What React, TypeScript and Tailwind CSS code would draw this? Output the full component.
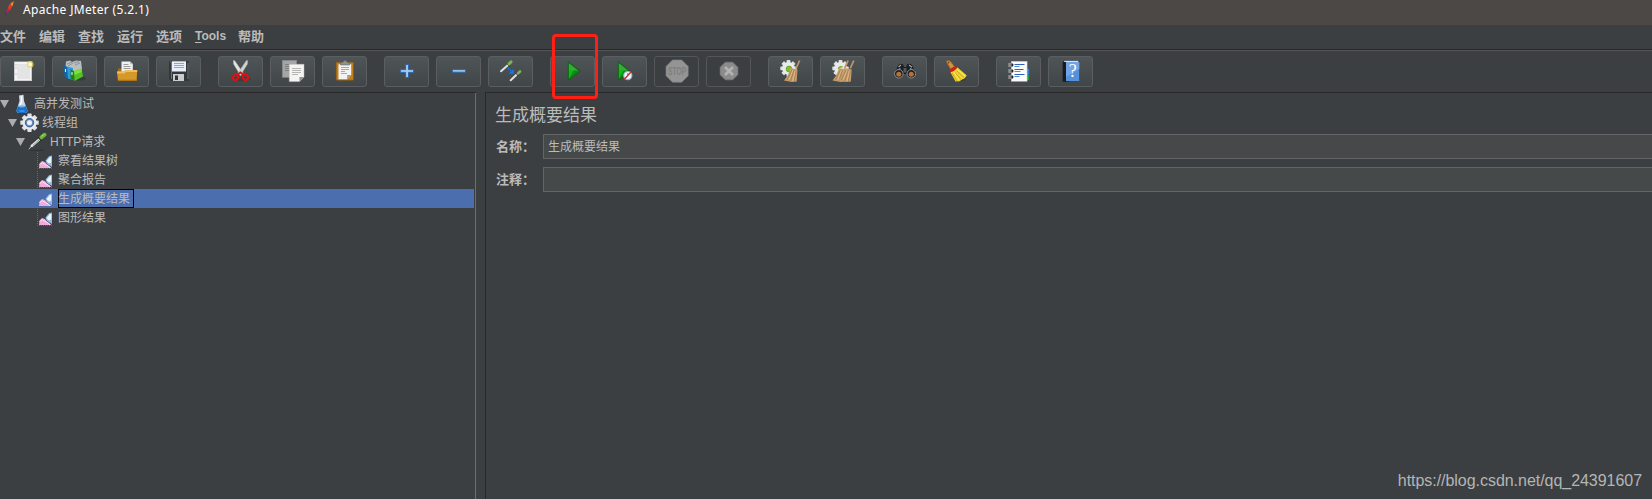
import React from "react";

type Glyph = () => React.JSX.Element;

const star = (cx: number, cy: number, r: number) => {
  const pts: string[] = [];
  for (let i = 0; i < 8; i++) {
    const a = (Math.PI / 4) * i + Math.PI / 8;
    pts.push(`${(cx + r * Math.cos(a)).toFixed(2)},${(cy + r * Math.sin(a)).toFixed(2)}`);
  }
  return pts.join(" ");
};

const Gear = ({ cx, cy, s = 1 }: { cx: number; cy: number; s?: number }) => (
  <g transform={`translate(${cx} ${cy}) scale(${s})`}>
    {[0, 45, 90, 135].map((a) => (
      <rect key={a} x="-1.9" y="-8.2" width="3.8" height="16.4" rx=".6" fill="#dfe1e3" transform={`rotate(${a})`} />
    ))}
    <circle r="6.3" fill="#e9eaeb" />
  </g>
);

const SmallBroom = ({ x }: { x: number }) => (
  <g transform={`translate(${x} 0)`}>
    <path d="M31.6 4.5 28 12.5" stroke="#c09566" strokeWidth="1.8" />
    <path d="M22.5 12 29.5 13.5 28.7 25.4 24 26 16 24.5 20 19Z" fill="#c49c6c" />
    <path d="M24 14 19 24M26 14 22.5 25M28 15 26 25.5" stroke="#94703f" strokeWidth=".6" />
    <path d="M25 14 21 23.5M27.2 15 24.8 25" stroke="#e6c89c" strokeWidth=".7" />
  </g>
);

const NewFile: Glyph = () => (
  <g>
    <rect x="14" y="5.5" width="18" height="19.5" fill="#c9c9c9" />
    <rect x="15" y="6" width="16" height="18.2" fill="#f4f4f4" />
    <rect x="17" y="8" width="13" height="15" fill="#e4e4e4" />
    <path d="M15.5 9h1M15.5 12h1M15.5 18h1" stroke="#999" />
    <circle cx="30.2" cy="8.4" r="3.4" fill="#e8d65c" opacity=".75" />
    <circle cx="30.2" cy="8.4" r="1.9" fill="#fdf9cf" />
  </g>
);

const Templates: Glyph = () => (
  <g>
    <ellipse cx="27" cy="22.5" rx="7" ry="2" fill="#2c2f30" opacity=".5" />
    <path d="M13.5 11 14 5.5 18 4.5 20 6 24 4.5 29 5 30 13 22 16Z" fill="#b9bfc1" />
    <path d="M15 8l5-2M16 10l5-3M22 7l5-1.5M23 9l5-2" stroke="#7e878b" strokeWidth=".8" />
    <path d="M12 9.5 17 11.5V23.5L12.5 20.5Z" fill="#0e66ae" />
    <path d="M15 10.5 21 12V24L16 22.5Z" fill="#2d9be0" />
    <path d="M18.5 13 22.5 15.5V25L18.5 22.5Z" fill="#23820f" />
    <path d="M22 15 29.5 12.5 31 20.5 22.5 25Z" fill="#4fc51f" />
    <path d="M22 15 29.5 12.5 29.8 16 22.5 19Z" fill="#7ddd42" />
    <path d="M13.5 13v3M20 16v3" stroke="#d9f3ff" strokeWidth="1.1" />
  </g>
);

const Open: Glyph = () => (
  <g>
    <path d="M14 12.5h5l1 1.5h12.5V24H14Z" fill="#a86c10" />
    <path d="M17.5 5.5h8.7l2.6 2.6V18H17.5Z" fill="#f1f1f1" />
    <path d="M26 5.5v2.8h2.8" fill="#bdbdbd" />
    <path d="M19.5 8.5h5M19.5 10.5h7M19.5 12.5h7" stroke="#9b9b9b" />
    <path d="M13 15.5H20l1.5-1.6H33.2L32.5 25H14Z" fill="#d5982a" />
    <path d="M13 15.5H20l1.5-1.6H33.2v2H22l-1.3 1.6H13.2Z" fill="#efbf5b" />
    <path d="M14 24.3h18.5" stroke="#a86c10" />
  </g>
);

const Save: Glyph = () => (
  <g>
    <path d="M13.5 5h18.5q1 0 1 1v19H15l-2-2V5.5Z" fill="#35383a" />
    <path d="M14 6h1.5v17M32 7v16" stroke="#6f7375" fill="none" />
    <rect x="16" y="5.3" width="14" height="10.2" fill="#e7f0fa" />
    <path d="M18 7.5h10M18 9.5h10M18 11.5h10" stroke="#8aa8cb" />
    <rect x="17" y="18" width="11" height="7" fill="#c9cccd" />
    <rect x="19" y="19.5" width="3" height="4.5" fill="#333" />
  </g>
);

const Cut: Glyph = () => (
  <g>
    <ellipse cx="24" cy="23" rx="9" ry="2.2" fill="#2c2f30" opacity=".4" />
    <path d="M15.3 4.6Q16 3.8 17 5L25.5 17.5 22.5 19.5 15.5 8Z" fill="#e4e6e4" stroke="#9fa2a0" strokeWidth=".4" />
    <path d="M29.7 4.6Q29 3.8 28 5L19.5 17.5 22.5 19.5 29.5 8Z" fill="#cfd2cf" stroke="#9fa2a0" strokeWidth=".4" />
    <ellipse cx="17.7" cy="21" rx="2.6" ry="3" fill="none" stroke="#dc1111" strokeWidth="2.2" transform="rotate(30 17.7 21)" />
    <ellipse cx="27.3" cy="21" rx="2.6" ry="3" fill="none" stroke="#dc1111" strokeWidth="2.2" transform="rotate(-30 27.3 21)" />
    <path d="M19 19 22.5 16.5 26 19" stroke="#dc1111" strokeWidth="2" fill="none" />
  </g>
);

const Copy: Glyph = () => (
  <g>
    <rect x="12.3" y="4.3" width="14.4" height="17" fill="#a4a6a5" stroke="#858786" strokeWidth=".6" />
    <path d="M15 8.5h9M15 10.5h4M15 12.5h4M15 14.5h4" stroke="#7d7f7e" />
    <path d="M19.3 8.3H34V21l-4.5 4.6H19.3Z" fill="#f4f4f3" stroke="#bdbdbd" strokeWidth=".5" />
    <path d="M34 21l-4.5 4.6V21Z" fill="#8f908f" />
    <path d="M22 12.5h9M22 14.5h9M22 16.5h9M22 18.5h6" stroke="#b4b5b4" />
  </g>
);

const Paste: Glyph = () => (
  <g>
    <rect x="14.2" y="6.2" width="17.3" height="18" rx="1" fill="#c37f18" stroke="#8a560b" strokeWidth=".6" />
    <path d="M16.5 8.3h12.7V19l-4 4.2h-8.7Z" fill="#f2f2f1" />
    <path d="M29.2 19l-4 4.2V19Z" fill="#9a9a98" />
    <path d="M19 11.5h8M19 13.5h8M19 15.5h4M19 17.5h6" stroke="#a9aaa8" />
    <path d="M18.5 9V6.5h2.4Q21 4.6 23 4.6t2.2 1.9h2.3V9Z" fill="#8f918e" stroke="#5f615e" strokeWidth=".5" />
  </g>
);

const Plus: Glyph = () => (
  <path d="M21.6 8.5h2.9v5.1h5.1v2.8h-5.1v5.2h-2.9v-5.2h-5.2v-2.8h5.2Z" fill="#a4c8ec" stroke="#2b65b0" strokeWidth="1" />
);

const Minus: Glyph = () => <rect x="16.4" y="13.6" width="13.2" height="2.6" fill="#a4c8ec" stroke="#2b65b0" strokeWidth="1" />;

const Toggle: Glyph = () => (
  <g strokeLinecap="round">
    <path d="M13 15.2 20 9" stroke="#dfe2df" strokeWidth="2" />
    <path d="M19.4 8 21.4 10.2" stroke="#1e241c" strokeWidth="1" />
    <path d="M21 7.8 23 5.9" stroke="#7fb35a" strokeWidth="3" />
    <path d="M22.7 24.2 28.5 18.7" stroke="#dfe2df" strokeWidth="2" />
    <path d="M28.2 17.6 30 19.5" stroke="#1e241c" strokeWidth="1" />
    <path d="M30 17.4 32 15.5" stroke="#7fb35a" strokeWidth="2.6" />
    <path d="M19.8 12 23 15" stroke="#1677f2" strokeWidth="1.6" strokeDasharray="1.6 1.2" strokeLinecap="butt" />
    <path d="M25.8 13V17.8H20.6Z" fill="#1677f2" />
  </g>
);

const Play = ({ x = 18 }: { x?: number }) => (
  <g transform={`translate(${x - 18} 0)`}>
    <path d="M18.3 5.8 30 15 18.3 24.2Z" fill="#0c8a12" stroke="#075c0a" strokeWidth=".7" />
    <path d="M18.9 7.3 27.8 14.6 18.9 14.6Z" fill="#3aa83c" />
    <path d="M18.9 14 24 14 18.9 22.5Z" fill="#0fb817" />
  </g>
);

const Start: Glyph = () => <Play />;

const StartNoTimers: Glyph = () => (
  <g>
    <Play x={16} />
    <circle cx="25.8" cy="19.6" r="4.1" fill="#eef4fb" stroke="#8eb0d8" strokeWidth="1.1" />
    <path d="M25.8 17v2.6" stroke="#5c7fb0" />
    <path d="M29.3 15.6 22 23.8" stroke="#c82b2b" strokeWidth="1.4" />
  </g>
);

const Stop: Glyph = () => (
  <g>
    <polygon points={star(23.1, 15.1, 12)} fill="#949494" stroke="#818181" strokeWidth=".6" />
    <text x="23.1" y="18.6" textAnchor="middle" textLength="18" lengthAdjust="spacingAndGlyphs" className="fill-[#7f7f7f] font-['Liberation_Sans'] text-[10px] font-bold">
      STOP
    </text>
  </g>
);

const Shutdown: Glyph = () => (
  <g>
    <polygon points={star(23, 15, 9.6)} fill="#8b8b8b" stroke="#7a7a7a" strokeWidth=".6" />
    <path d="M19 11l8 8M27 11l-8 8" stroke="#b3b3b3" strokeWidth="2.6" />
  </g>
);

const Clear: Glyph = () => (
  <g>
    <Gear cx={20.5} cy={12.3} />
    <circle cx="21" cy="13" r="2.9" fill="#7bc520" stroke="#4c8c12" strokeWidth=".6" />
    <SmallBroom x={0} />
  </g>
);

const ClearAll: Glyph = () => (
  <g>
    <Gear cx={20.5} cy={12.3} />
    <path d="M18.5 13a2.8 2.8 0 0 1 4-2" stroke="#6fb51d" strokeWidth="1.6" fill="none" />
    <SmallBroom x={-3.5} />
    <SmallBroom x={2.2} />
  </g>
);

const Search: Glyph = () => (
  <g>
    <path d="M12.2 18 16 9.5Q18 6.7 21 8.3L22 11h2.2l1-2.7Q28.2 6.7 30.3 9.5L34 18Z" fill="#1d1e20" />
    <path d="M16.5 11 19 9M27 9l3 2.3M15 14.5l3.5-2M28 12.5l3.5 2" stroke="#a5a9ad" strokeWidth="1.1" />
    <circle cx="16.8" cy="17.8" r="4.3" fill="#202124" stroke="#8b8e92" strokeWidth="1" />
    <circle cx="29.3" cy="17.8" r="4.3" fill="#202124" stroke="#8b8e92" strokeWidth="1" />
    <circle cx="16.8" cy="18.3" r="2.5" fill="#b5713a" />
    <circle cx="29.3" cy="18.3" r="2.5" fill="#b5713a" />
    <rect x="21.5" y="12" width="3" height="4.5" fill="#55585c" />
  </g>
);

const Broom: Glyph = () => (
  <g>
    <path d="M22 24.5 33 20.5 31 25Z" fill="#2c2f30" opacity=".4" />
    <path d="M12.2 5.6Q13.5 3.8 16 4.8L20.5 10.5 16.5 13Z" fill="#d3913d" stroke="#95591a" strokeWidth=".6" />
    <circle cx="14.6" cy="6.5" r=".9" fill="#7d4812" />
    <path d="M16 15.5 23 11 32.8 19.5 30.5 22.5 28 23.5 25.5 25.3 21.5 25.5Z" fill="#efd52f" />
    <path d="M18 17 23 25M20.5 16 27 23.5M22.5 14.5 30 21.5" stroke="#b8940f" strokeWidth=".7" />
    <path d="M20 16 25 24M23 13.5 31 20" stroke="#fff58a" strokeWidth=".7" />
    <path d="M15.8 15.2Q20 14 22.5 10.7" stroke="#cf1f1b" strokeWidth="2.8" fill="none" />
  </g>
);

const FunctionHelper: Glyph = () => (
  <g>
    <rect x="30" y="12.7" width="3.3" height="6" fill="#2a7de0" />
    <rect x="30" y="19" width="3.3" height="5" fill="#239b1f" />
    <rect x="15.3" y="5.3" width="15.8" height="20" fill="#fafafa" stroke="#b9b9b9" strokeWidth=".5" />
    <path d="M18.5 8.5h10M18.5 13.5h9M18.5 18.5h10" stroke="#2c62bd" strokeWidth="1.2" />
    <path d="M18.5 10.5h5M18.5 15.5h6M18.5 20.5h5" stroke="#5a8ad2" strokeWidth="1.1" />
    {[9, 15, 21].map((y) => (
      <g key={y}>
        <circle cx="15.8" cy={y} r="1.7" fill="#222" />
        <path d={`M12.300 ${y - 1}h3.400M12.300 ${y + 1}h3.400`} stroke="#e3e3e3" strokeWidth=".9" />
      </g>
    ))}
  </g>
);

const Help: Glyph = () => (
  <g>
    <path d="M14.7 6 17 4.5H31.3V24H30L18 25.7H14.7Z" fill="#191a1c" />
    <path d="M16.5 4.7H31L30 6H16Z" fill="#d9dfe5" />
    <rect x="18" y="6" width="13.3" height="19" fill="#5590dc" />
    <path d="M18 6h13.3v7L18 21Z" fill="#6ea4e8" />
    <text x="24.7" y="21" textAnchor="middle" className="fill-white font-['Liberation_Serif'] text-[18px]">?</text>
  </g>
);

const groups: { icon: Glyph; name: string; off?: boolean }[][] = [
  [{ icon: NewFile, name: "new" }, { icon: Templates, name: "templates" }, { icon: Open, name: "open" }, { icon: Save, name: "save" }],
  [{ icon: Cut, name: "cut" }, { icon: Copy, name: "copy" }, { icon: Paste, name: "paste" }],
  [{ icon: Plus, name: "expand" }, { icon: Minus, name: "collapse" }, { icon: Toggle, name: "toggle" }],
  [{ icon: Start, name: "start" }, { icon: StartNoTimers, name: "startNoTimers" }, { icon: Stop, name: "stop", off: true }, { icon: Shutdown, name: "shutdown", off: true }],
  [{ icon: Clear, name: "clear" }, { icon: ClearAll, name: "clearAll" }],
  [{ icon: Search, name: "search" }, { icon: Broom, name: "resetSearch" }],
  [{ icon: FunctionHelper, name: "functions" }, { icon: Help, name: "help" }],
];

const Flask: Glyph = () => (
  <g>
    <path d="M7 1.5 11.5 .8 12 7 15.5 16.5Q15.500 19 12.500 19H7.500Q4.500 19 4.500 16.500L7.500 7Z" fill="#cdd9e4" />
    <path d="M9.500 2v6L7 13" stroke="#fff" strokeWidth="1.300" fill="none" />
    <path d="M6 12H13.800L15.500 16.500Q15.500 19 12.500 19H7.500Q4.500 19 4.500 16.500Z" fill="#1670cf" />
    <ellipse cx="9.800" cy="12.300" rx="3.700" ry="1.100" fill="#75b6f2" />
    <path d="M7.500 17h5" stroke="#54a5f0" strokeWidth="1.200" />
  </g>
);

const ThreadGroup: Glyph = () => (
  <g>
    <Gear cx={9.5} cy={9.7} s={1.12} />
    <circle cx="9.5" cy="9.7" r="4.2" fill="#6288bf" stroke="#385f9c" strokeWidth="1" />
    <circle cx="9.5" cy="9.7" r="2.6" fill="#dbe6f5" />
    <path d="M8.500 7.900 11.500 9.700 8.500 11.500Z" fill="#fff" />
  </g>
);

const Pipette: Glyph = () => (
  <g strokeLinecap="round">
    <path d="M3 18.3h12" stroke="#26292a" strokeWidth="1.2" opacity=".5" />
    <path d="M1 16.8 4 14" stroke="#c9cdcc" strokeWidth="1" />
    <path d="M3.7 14 11.3 7.3" stroke="#e3e7e6" strokeWidth="2.4" />
    <path d="M5 13.3 11 8" stroke="#7f8a88" strokeWidth=".8" />
    <path d="M10.5 5.5 13.6 8.8" stroke="#2a3327" strokeWidth="1.5" />
    <path d="M13.5 5.3 16.5 2.8" stroke="#6bb23f" strokeWidth="4" />
    <path d="M13.5 4.3 16 2.4" stroke="#a9dd7f" strokeWidth="1" />
  </g>
);

const Chart: Glyph = () => (
  <g>
    <path d="M1.5 1v16.500H17" stroke="#656a6c" strokeDasharray="1 1" fill="none" />
    <path d="M3 17 3.500 12.500 6 10 9 11 11 13.500 15.500 17Z" fill="#f3a9dc" />
    <path d="M3.500 14 6 11.500 9 13.500 12.500 15 14 17" stroke="#ffe0f6" fill="none" />
    <path d="M9.500 9.500 13 5.200 16 4.500V16L11 13Z" fill="#8fbbe0" />
    <path d="M10.500 10 14 6 15.200 6V11.500L13 12.500Z" fill="#e8f5fd" />
  </g>
);

const tree: { label: string; depth: number; icon: Glyph; leaf?: boolean; selected?: boolean }[] = [
  { label: "高并发测试", depth: 0, icon: Flask },
  { label: "线程组", depth: 1, icon: ThreadGroup },
  { label: "HTTP请求", depth: 2, icon: Pipette },
  { label: "察看结果树", depth: 3, icon: Chart, leaf: true },
  { label: "聚合报告", depth: 3, icon: Chart, leaf: true },
  { label: "生成概要结果", depth: 3, icon: Chart, leaf: true, selected: true },
  { label: "图形结果", depth: 3, icon: Chart, leaf: true },
];
const indent = ["pl-0", "pl-2", "pl-4", "pl-6"];

const menu = ["文件", "编辑", "查找", "运行", "选项", "Tools", "帮助"];

const Field = ({ label, value }: { label: string; value: string }) => (
  <div className="flex h-[25px] items-center">
    <span className="w-[47px] shrink-0 text-[13px] font-bold leading-none">{label}</span>
    <div className="flex h-full flex-1 items-center border border-r-0 border-[#646464] bg-[#45494a] pl-1 text-[12px] leading-none">
      {value}
    </div>
  </div>
);

export default function App() {
  return (
    <div className="relative flex h-[499px] w-[1652px] flex-col overflow-hidden bg-[#3c3f41] font-['Liberation_Sans','Noto_Sans_CJK_SC',sans-serif] text-[#bbbbbb]">
      <header className="flex h-[25px] shrink-0 items-start bg-[#4b4846]">
        <svg width="23" height="18" viewBox="0 0 23 18">
          <path d="M13.8 1 12.8 5.500 10 8.500 10 4Z" fill="#f28a27" />
          <path d="M10.500 3 12 6.500 9.500 11 7 12 8.500 6Z" fill="#e03a2d" />
          <path d="M7.800 8 9.800 10 7.500 13 5.800 12.500Z" fill="#b91f55" />
          <path d="M6.300 12.500 5.300 15.500" stroke="#5b2a66" />
        </svg>
        <span className="text-[12px] leading-[20px] tracking-[0.33px] text-white font-['Noto_Sans',sans-serif]">Apache JMeter (5.2.1)</span>
      </header>

      <nav className="flex h-[24px] shrink-0 items-center gap-[13px] pb-[2px] text-[13px] font-bold leading-none">
        {menu.map((m) =>
          m === "Tools" ? (
            <span key={m} className="w-[30px] whitespace-nowrap text-[12px]">
              <span className="underline underline-offset-2">T</span>ools
            </span>
          ) : (
            <span key={m} className="w-[26px] whitespace-nowrap">{m}</span>
          ),
        )}
      </nav>

      <div className="h-[43px] shrink-0 border-t border-[#282828]">
        <div className="flex h-full w-full gap-[17px] border-t border-[#555555] pt-[5px]">
          {groups.map((g, i) => (
            <div key={i} className="flex gap-[7px]">
              {g.map(({ icon: Icon, name, off }) => (
                <button
                  key={name}
                  className={
                    off
                      ? "h-[31px] w-[45px] rounded-[3px] border border-[#53575a]"
                      : "h-[31px] w-[45px] rounded-[3px] border border-[#5a5e60] bg-linear-to-b from-[#4f5456] to-[#414648]"
                  }
                >
                  <svg className="-m-px block" width="45" height="31" viewBox="0 0 45 31" fill="none">
                    <Icon />
                  </svg>
                </button>
              ))}
            </div>
          ))}
        </div>
      </div>

      <main className="flex min-h-0 flex-1">
        <aside className="flex w-[476px] shrink-0 flex-col border-t border-[#282828]">
          <div className="flex flex-1 flex-col border-r border-[#6b6d6e] pr-px pt-px">
            {tree.map(({ label, depth, icon: Icon, leaf, selected }) => (
              <div key={label} className={selected ? "flex h-[19px] bg-[#4b6eaf]" : "flex h-[19px]"}>
                <div className={`flex items-center ${indent[depth]}`}>
                  <svg width="12" height="19" viewBox="0 0 12 19">
                    {!leaf && <path d="M0 6h9L4.500 14Z" fill="#adadad" />}
                  </svg>
                  <svg width="22" height="19" viewBox="0 0 22 19" fill="none">
                    <Icon />
                  </svg>
                  <span
                    className={
                      selected
                        ? "flex h-[19px] w-[76px] items-center border border-black text-[12px] leading-none"
                        : "whitespace-nowrap text-[12px] leading-none"
                    }
                  >
                    <span className={selected ? "-ml-px" : ""}>{label}</span>
                  </span>
                </div>
              </div>
            ))}
          </div>
        </aside>
        <section className="ml-[9px] flex flex-1 flex-col border-l border-t border-[#282828] pl-[10px]">
          <h1 className="h-[41px] pt-[14px] text-[17px] leading-[18px] -ml-px">生成概要结果</h1>
          <div className="flex flex-col gap-2">
            <Field label="名称：" value="生成概要结果" />
            <Field label="注释：" value="" />
          </div>
        </section>
      </main>

      <div className="absolute left-[552px] top-[34px] h-[65px] w-[46px] rounded-[4px] border-[3px] border-[#ff2015]" />
      <div className="absolute right-[10px] top-[471px] whitespace-nowrap text-[16px] leading-[20px] tracking-[-0.04px] text-[#b4b5b6]">
        https://blog.csdn.net/qq_24391607
      </div>
    </div>
  );
}
